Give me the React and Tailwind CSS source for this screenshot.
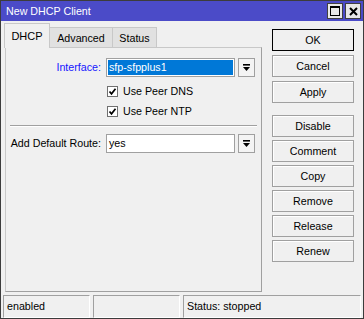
import React from 'react';

const font = { fontFamily: '"Liberation Sans", Arial, sans-serif' };

// small arrow used by the combo boxes
const DropIcon = () => (
  <svg width="9" height="8" viewBox="0 0 9 8">
    <rect x="1" y="0" width="7" height="1.6" fill="#000" />
    <path d="M1 3 H8 L4.5 7 Z" fill="#000" />
  </svg>
);

const Combo = ({ value, selected }) => (
  <div className="flex items-center gap-[3px]">
    <div className="h-[19px] w-[129px] border border-[#a0a0a0] bg-white p-[1px]">
      <div
        className={
          selected
            ? 'h-full bg-[#0078d7] px-[1px] text-[10.7px] leading-[15px] text-white'
            : 'h-full px-[1px] text-[10.7px] leading-[15px] text-black'
        }
      >
        {value}
      </div>
    </div>
    <div className="flex h-[19px] w-[17px] items-center justify-center border border-[#a0a0a0] bg-[#f4f4f4]">
      <DropIcon />
    </div>
  </div>
);

const Check = ({ label }) => (
  <div className="flex h-[20px] items-center pl-[101px]">
    <div className="flex h-[11px] w-[11px] items-center justify-center border border-[#707070] bg-white">
      <svg width="9" height="9" viewBox="0 0 9 9">
        <path d="M1.5 4.5 L3.5 6.8 L7.5 1.8" stroke="#000" strokeWidth="1.7" fill="none" />
      </svg>
    </div>
    <span className="ml-[5px] text-[10.7px] text-black">{label}</span>
  </div>
);

const Btn = ({ children, primary }) => (
  <div
    className={
      primary
        ? 'flex h-[22px] items-center justify-center border border-black bg-[#f0f0f0] text-[10.7px] text-black'
        : 'flex h-[22px] items-center justify-center border border-[#a0a0a0] bg-[#f0f0f0] text-[10.7px] text-black shadow-[inset_1px_1px_0_#ffffff]'
    }
  >
    {children}
  </div>
);

const StatusCell = ({ children, width }) => (
  <div
    className="flex h-[23px] items-center border-t border-l border-[#a0a0a0] pl-[3px] text-[10.7px] text-black"
    style={{ width, borderRight: '1px solid #fff', borderBottom: '1px solid #fff' }}
  >
    {children}
  </div>
);

export default function App() {
  return (
    <div style={font} className="flex h-[319px] w-[364px] flex-col border border-[#3c3c3c] bg-[#f0f0f0]">
      {/* title bar */}
      <div className="flex h-[20px] items-center justify-between bg-[#4b4bc8] pl-[5px] pr-[2px]">
        <span className="text-[10.7px] text-white">New DHCP Client</span>
        <div className="flex gap-[2px]">
          <div className="flex h-[16px] w-[16px] items-center justify-center border border-[#404040] bg-[#e8e8e8]">
            <div className="h-[10px] w-[10px] border border-black border-t-2" />
          </div>
          <div className="flex h-[16px] w-[16px] items-center justify-center border border-[#404040] bg-[#e8e8e8]">
            <svg width="9" height="9" viewBox="0 0 9 9">
              <path d="M1 1 L8 8 M8 1 L1 8" stroke="#000" strokeWidth="2" />
            </svg>
          </div>
        </div>
      </div>

      <div className="flex flex-1">
        {/* left: tabs and panel */}
        <div className="ml-[4px] mt-[2px] flex w-[257px] flex-col">
          <div className="flex h-[24px] items-end">
            <div className="relative z-10 -mb-px -ml-[1px] flex h-[25px] w-[46px] items-center justify-center border border-b-0 border-[#c8c8c8] bg-[#f0f0f0] pt-[1px] text-[11px] text-black">
              DHCP
            </div>
            <div className="flex h-[20px] w-[63px] items-center justify-center border border-b-0 border-l-0 border-[#c8c8c8] bg-[#e1e1e1] pt-[2px] text-[10.7px] text-black">
              Advanced
            </div>
            <div className="flex h-[20px] w-[44px] items-center justify-center border border-b-0 border-l-0 border-[#c8c8c8] bg-[#e1e1e1] pt-[2px] text-[10.7px] text-black">
              Status
            </div>
          </div>
          <div className="flex h-[245px] flex-col border border-[#c8c8c8] border-r-[#a0a0a0] border-b-[#a0a0a0] bg-[#f0f0f0] pt-[10px]">
            <div className="flex items-center">
              <span className="w-[95px] text-right text-[10.7px] text-[#1515ff]">Interface:</span>
              <div className="ml-[5px]">
                <Combo value="sfp-sfpplus1" selected />
              </div>
            </div>
            <div className="mt-[4px]">
              <Check label="Use Peer DNS" />
              <Check label="Use Peer NTP" />
            </div>
            <div className="mx-[4px] mt-[4px] h-[2px] border-t border-[#a0a0a0] border-b border-b-white" />
            <div className="mt-[7px] flex items-center">
              <span className="w-[95px] text-right text-[10.7px] text-black">Add Default Route:</span>
              <div className="ml-[5px]">
                <Combo value="yes" />
              </div>
            </div>
          </div>
        </div>

        {/* right: buttons */}
        <div className="ml-[10px] flex w-[82px] flex-col pt-[8px]">
          <div className="flex flex-col gap-[4px]">
            <Btn primary>OK</Btn>
            <Btn>Cancel</Btn>
            <Btn>Apply</Btn>
          </div>
          <div className="mt-[12px] flex flex-col gap-[3px]">
            <Btn>Disable</Btn>
            <Btn>Comment</Btn>
            <Btn>Copy</Btn>
            <Btn>Remove</Btn>
            <Btn>Release</Btn>
            <Btn>Renew</Btn>
          </div>
        </div>
      </div>

      {/* status bar */}
      <div className="flex gap-[3px] pl-[2px]">
        <StatusCell width={87}>enabled</StatusCell>
        <StatusCell width={87}></StatusCell>
        <StatusCell width={178}>Status: stopped</StatusCell>
      </div>
    </div>
  );
}
